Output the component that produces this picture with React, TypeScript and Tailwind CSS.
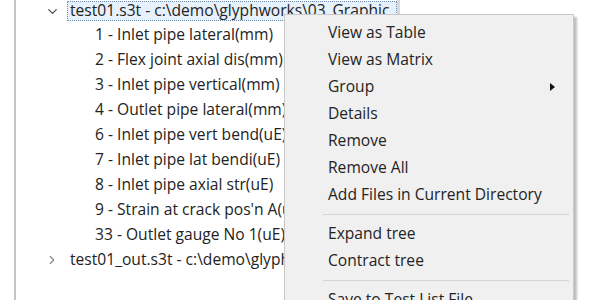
import { ChevronDown, ChevronRight } from "lucide-react";

const channels = [
  "1 - Inlet pipe lateral(mm)",
  "2 - Flex joint axial dis(mm)",
  "3 - Inlet pipe vertical(mm)",
  "4 - Outlet pipe lateral(mm)",
  "6 - Inlet pipe vert bend(uE)",
  "7 - Inlet pipe lat bendi(uE)",
  "8 - Inlet pipe axial str(uE)",
  "9 - Strain at crack pos'n A(uE)",
  "33 - Outlet gauge No 1(uE)",
];

type MenuEntry = { label: string; sub?: boolean } | "sep";

const menu: MenuEntry[] = [
  { label: "View as Table" },
  { label: "View as Matrix" },
  { label: "Group", sub: true },
  { label: "Details" },
  { label: "Remove" },
  { label: "Remove All" },
  { label: "Add Files in Current Directory" },
  "sep",
  { label: "Expand tree" },
  { label: "Contract tree" },
  "sep",
  { label: "Save to Test List File" },
];

export default function App() {
  return (
    <div
      className="relative w-[600px] h-[300px] overflow-hidden bg-white text-[#232323] text-[15.6px]"
      style={{ fontFamily: '"Open Sans", "Noto Sans", sans-serif' }}
    >
      <div className="flex h-full">
        <div className="w-[14px] shrink-0" />
        <div className="w-[2px] shrink-0 bg-[#c4c4c4]" />
        {/* tree panel */}
        <div className="w-[384px] shrink-0 h-full border-r-[3px] border-[#d9d9d9] overflow-hidden">
          <div className="flex items-center h-[22px]">
            <div className="w-[26px] shrink-0" />
            <div className="w-[20px] flex justify-center shrink-0">
              <ChevronDown size={15} strokeWidth={2.2} className="text-[#555]" />
            </div>
            <div className="ml-[5px] flex-1 h-[20px] flex items-center pl-[2px] bg-[#e6f1fb] border border-dotted border-[#6c8db3] whitespace-nowrap overflow-hidden">
              test01.s3t - c:\demo\glyphworks\03_Graphic
            </div>
          </div>
          {channels.map((c) => (
            <div key={c} className="h-[25px] flex items-center pl-[79px] whitespace-nowrap">
              {c}
            </div>
          ))}
          <div className="flex items-center h-[25px]">
            <div className="w-[26px] shrink-0" />
            <div className="w-[20px] flex justify-center shrink-0">
              <ChevronRight size={14} strokeWidth={2} className="text-[#888]" />
            </div>
            <div className="ml-[8px] whitespace-nowrap">test01_out.s3t - c:\demo\glyphworks\03_Graphic</div>
          </div>
        </div>
      </div>

      {/* context menu */}
      <div className="absolute left-[284px] top-[14px] w-[290px] bg-[#f0f0f0] border border-[#c8c8c8] pt-[4px] pb-[4px] shadow-[3px_3px_2px_rgba(0,0,0,0.25)]">
        {menu.map((m, i) =>
          m === "sep" ? (
            <div key={i} className="h-[12px] flex items-center pl-[38px] pr-[4px]">
              <div className="h-px w-full bg-[#d5d5d5]" />
            </div>
          ) : (
            <div key={i} className="h-[27px] flex items-center pl-[43px] pr-[18px] whitespace-nowrap">
              <span className="flex-1">{m.label}</span>
              {m.sub && (
                <svg width="5" height="8" viewBox="0 0 5 8">
                  <path d="M0 0 L5 4 L0 8 Z" fill="#111" />
                </svg>
              )}
            </div>
          )
        )}
      </div>
    </div>
  );
}
